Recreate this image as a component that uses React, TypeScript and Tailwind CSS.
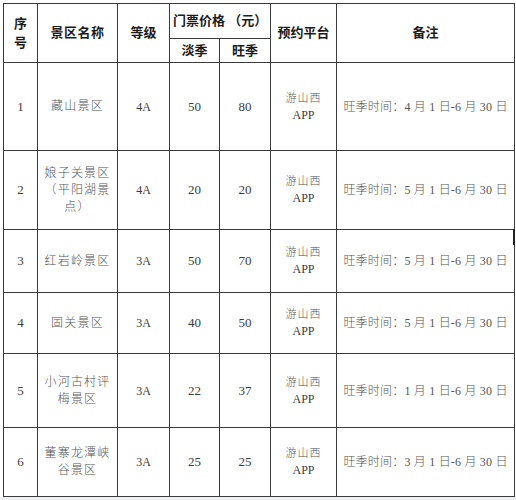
const serif = '"Liberation Serif", "Noto Sans CJK SC", serif';

interface Spot {
  no: string;
  name: string[];
  level: string;
  low: string;
  high: string;
  note: string;
  h: string;
}

const spots: Spot[] = [
  { no: '1', name: ['藏山景区'], level: '4A', low: '50', high: '80', note: '4', h: 'h-[88px]' },
  { no: '2', name: ['娘子关景区', '（平阳湖景', '点）'], level: '4A', low: '20', high: '20', note: '5', h: 'h-[79px]' },
  { no: '3', name: ['红岩岭景区'], level: '3A', low: '50', high: '70', note: '5', h: 'h-[63px]' },
  { no: '4', name: ['固关景区'], level: '3A', low: '40', high: '50', note: '5', h: 'h-[61px]' },
  { no: '5', name: ['小河古村评', '梅景区'], level: '3A', low: '22', high: '37', note: '1', h: 'h-[74px]' },
  { no: '6', name: ['董寨龙潭峡', '谷景区'], level: '3A', low: '25', high: '25', note: '3', h: 'h-[69px]' },
];

const cell = 'border border-[#3a3a3a] text-center align-middle p-0';
const head = `${cell} font-bold text-[13px] text-[#1c1c1c]`;
const body = `${cell} text-[12px] text-[#3c3c3c]`;

export default function App() {
  return (
    <div className="relative w-[516px] h-[500px] bg-white overflow-hidden" style={{ fontFamily: serif }}>
      <div className="pt-[3px] pl-[3px]">
        <table className="border-collapse table-fixed w-[511px]">
          <colgroup>
            <col className="w-[34px]" />
            <col className="w-[80px]" />
            <col className="w-[52px]" />
            <col className="w-[50px]" />
            <col className="w-[51px]" />
            <col className="w-[66px]" />
            <col className="w-[178px]" />
          </colgroup>
          <thead>
            <tr className="h-[35px]">
              <th rowSpan={2} className={`${head} leading-[19px]`}>
                序<br />号
              </th>
              <th rowSpan={2} className={`${head} tracking-[0.5px]`}>景区名称</th>
              <th rowSpan={2} className={head}>等级</th>
              <th colSpan={2} className={`${head} whitespace-nowrap`}>门票价格 （元）</th>
              <th rowSpan={2} className={head}>预约平台</th>
              <th rowSpan={2} className={head}>备注</th>
            </tr>
            <tr className="h-[24px]">
              <th className={head}>淡季</th>
              <th className={head}>旺季</th>
            </tr>
          </thead>
          <tbody>
            {spots.map((s) => (
              <tr key={s.no} className={s.h}>
                <td className={`${body} text-[13px]`}>{s.no}</td>
                <td className={`${body} font-light text-[#555] text-[11px] tracking-[1.2px] leading-[17px]`}>
                  {s.name.map((line, i) => (
                    <div key={i}>{line}</div>
                  ))}
                </td>
                <td className={body}>{s.level}</td>
                <td className={`${body} text-[13px]`}>{s.low}</td>
                <td className={`${body} text-[13px]`}>{s.high}</td>
                <td className={`${body} leading-[17px]`}>
                  <div className="font-light text-[#555] text-[11px] tracking-[1px]">游山西</div>
                  <div>APP</div>
                </td>
                <td className={`${body} font-light text-[#555] text-[11px] tracking-[0.2px] whitespace-nowrap`}>
                  旺季时间：{s.note} 月 1 日-6 月 30 日
                </td>
              </tr>
            ))}
          </tbody>
        </table>
      </div>
      <div className="absolute left-0 right-0 top-[497px] bottom-0 bg-[#eef0f3]" />
      <div className="absolute left-[513px] top-[229px] w-[2px] h-[16px] bg-[#222]" />
    </div>
  );
}
